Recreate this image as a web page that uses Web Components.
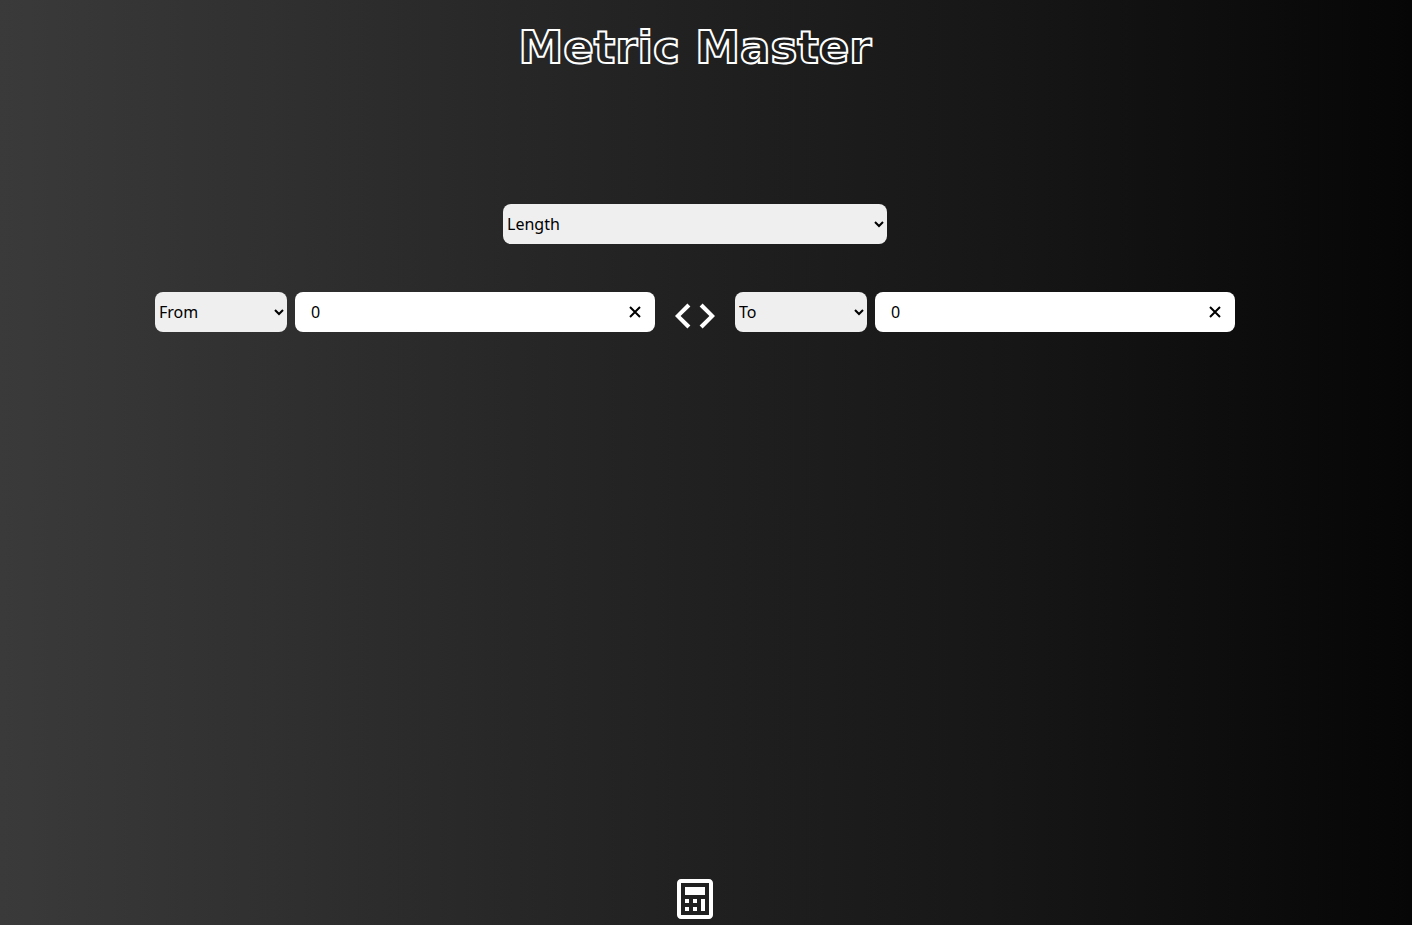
<!DOCTYPE html>
<html lang="en">
<head>
<meta charset="utf-8">
<meta name="viewport" content="width=device-width, initial-scale=1">
<title>Metric Master</title>
<style>
  html { height: 100%; }
  body { margin: 0; min-height: 100%; display: grid; font: 16px/24px "Noto Sans", sans-serif; color: #fff; background: linear-gradient(to right, #3a3a3a, #202020 50%, #161616 72%, #060606); }
</style>
</head>
<body>
<metric-app></metric-app>
<script>
const define = (name, html, setup) => {
  const template = document.createElement('template');
  template.innerHTML = html;
  customElements.define(name, class extends HTMLElement {
    constructor() {
      super();
      this.attachShadow({ mode: 'open' }).append(template.content.cloneNode(true));
    }
    connectedCallback() { if (setup) setup(this, this.shadowRoot); }
  });
};

define('page-title', `
<style>
  :host { display: block; }
  h1 { margin: 0; font: bold 45px/64px "DejaVu Sans", sans-serif; color: transparent; -webkit-text-stroke: 2px #fff; white-space: nowrap; }
</style>
<h1><slot></slot></h1>`);

define('unit-select', `
<style>
  :host { display: block; }
  select { display: block; box-sizing: border-box; width: 100%; height: 40px; margin: 0; padding: 0; border: 0; border-radius: 8px; background: #efefef; color: #000; font: inherit; }
</style>
<select><option></option></select>`, (host, root) => {
  root.querySelector('option').textContent = host.getAttribute('value');
  root.querySelector('select').setAttribute('aria-label', host.getAttribute('label'));
});

define('value-field', `
<style>
  :host { display: block; }
  .box { display: flex; align-items: center; height: 40px; border-radius: 8px; background: #fff; overflow: hidden; }
  input { flex: 1; min-width: 0; height: 40px; box-sizing: border-box; border: 0; padding: 0 16px; background: none; color: #000; font: inherit; outline: 0; }
  button { display: grid; place-items: center; width: 40px; height: 40px; padding: 0; border: 0; background: none; color: #000; }
  svg { width: 16px; height: 16px; }
</style>
<div class="box">
  <input type="text" inputmode="decimal" value="0">
  <button type="button" aria-label="Clear"><svg viewBox="0 0 16 16" fill="none" stroke="currentColor" stroke-width="2"><path d="M3 3l10 10M13 3L3 13"/></svg></button>
</div>`, (host, root) => {
  const input = root.querySelector('input');
  input.setAttribute('aria-label', host.getAttribute('label'));
  root.querySelector('button').onclick = () => { input.value = '0'; };
});

define('unit-group', `
<style>
  :host { display: grid; grid-template-columns: 132px minmax(0, 360px); gap: 8px; }
</style>
<slot></slot>`);

define('icon-button', `
<style>
  :host { display: block; }
  button { display: block; padding: 0; border: 0; background: none; color: #fff; }
  ::slotted(svg) { display: block; width: 48px; height: 48px; fill: currentColor; }
</style>
<button type="button"><slot></slot></button>`, (host, root) => {
  root.querySelector('button').setAttribute('aria-label', host.getAttribute('label'));
});

define('metric-app', `
<style>
  :host { display: flex; flex-direction: column; align-items: center; box-sizing: border-box; padding: 16px 22px 2px 0; }
  .category { width: 384px; max-width: 100%; margin-top: 124px; }
  .converter { display: flex; flex-wrap: wrap; justify-content: center; align-items: flex-start; gap: 16px; margin-top: 48px; }
  footer { margin-top: auto; }
</style>
<page-title>Metric Master</page-title>
<unit-select class="category" label="Category" value="Length"></unit-select>
<div class="converter">
  <unit-group><unit-select label="From unit" value="From"></unit-select><value-field label="From value"></value-field></unit-group>
  <icon-button label="Swap units"><svg viewBox="0 0 24 24"><path d="M8.2 5.7 9.7 7.2 4.8 12l4.9 4.8-1.5 1.5L2 12zM15.8 5.7 14.3 7.2 19.2 12l-4.9 4.8 1.5 1.5L22 12z"/></svg></icon-button>
  <unit-group><unit-select label="To unit" value="To"></unit-select><value-field label="To value"></value-field></unit-group>
</div>
<footer><icon-button label="Calculator"><svg viewBox="0 0 24 24"><path d="M19 2H5c-1.103 0-2 .897-2 2v16c0 1.103.897 2 2 2h14c1.103 0 2-.897 2-2V4c0-1.103-.897-2-2-2zM5 20V4h14v16H5z"/><path d="M7 12h2v2H7zm0 4h2v2H7zm4-4h2v2h-2zm0 4h2v2h-2zm4-4h2v6h-2zM7 6h10v4H7z"/></svg></icon-button></footer>`);
</script>
</body>
</html>
